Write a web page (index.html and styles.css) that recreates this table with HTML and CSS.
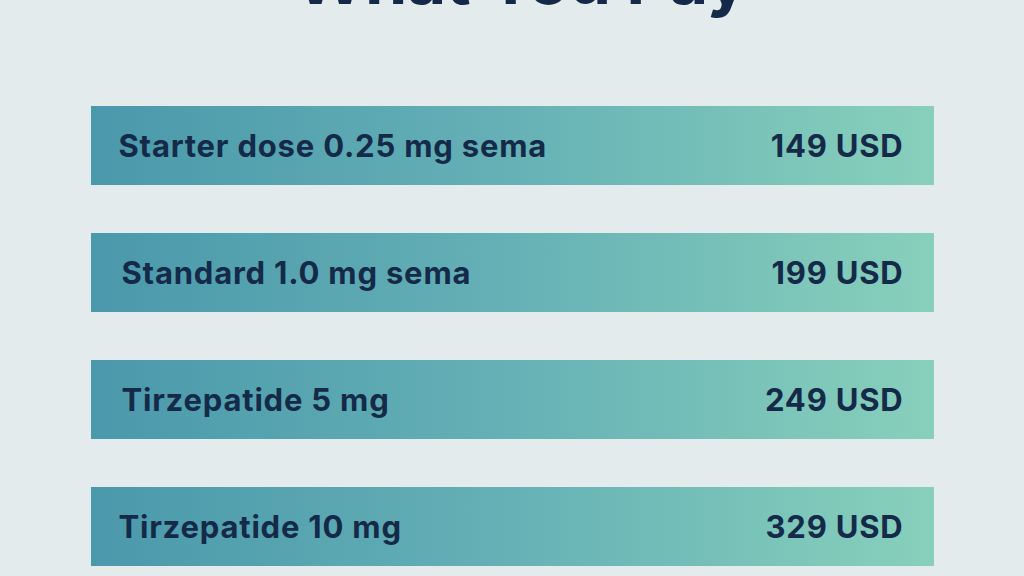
FILE: index.html
```html
<!DOCTYPE html>
<html lang="en">
<head>
<meta charset="utf-8">
<title>What You Pay</title>
<link rel="stylesheet" href="styles.css">
</head>
<body>
<main class="page">
  <h1 class="title">What You Pay</h1>
  <ul class="price-list">
    <li class="price-row"><span class="label">Starter dose 0.25 mg sema</span><span class="price">149 USD</span></li>
    <li class="price-row shift"><span class="label">Standard 1.0 mg sema</span><span class="price">199 USD</span></li>
    <li class="price-row shift"><span class="label">Tirzepatide 5 mg</span><span class="price">249 USD</span></li>
    <li class="price-row"><span class="label">Tirzepatide 10 mg</span><span class="price">329 USD</span></li>
  </ul>
</main>
</body>
</html>
```
FILE: styles.css
```css
html, body {
  margin: 0;
  padding: 0;
  height: 100%;
  overflow: hidden;
}
body {
  background: #e3ebed;
  font-family: Inter, "Noto Sans", sans-serif;
  color: #14284a;
}
.page {
  display: flex;
  flex-direction: column;
  align-items: center;
}
.title {
  margin: -55px 0 0 18px;
  font-size: 68px;
  line-height: 68px;
  font-weight: 700;
  letter-spacing: -0.5px;
  color: #14284a;
}
.price-list {
  list-style: none;
  margin: 93px 0 0 0;
  padding: 0;
  width: 843px;
  display: flex;
  flex-direction: column;
  gap: 48px;
}
.price-row {
  height: 79px;
  display: flex;
  align-items: center;
  justify-content: space-between;
  padding: 0 30px 0 28px;
  background: linear-gradient(90deg, #4a98ab 0%, #66b1b6 50%, #88d0bb 100%);
  font-size: 31px;
  font-weight: 700;
  letter-spacing: 0.8px;
  color: #142a48;
}
.price-row.shift .label {
  margin-left: 3px;
}
```
